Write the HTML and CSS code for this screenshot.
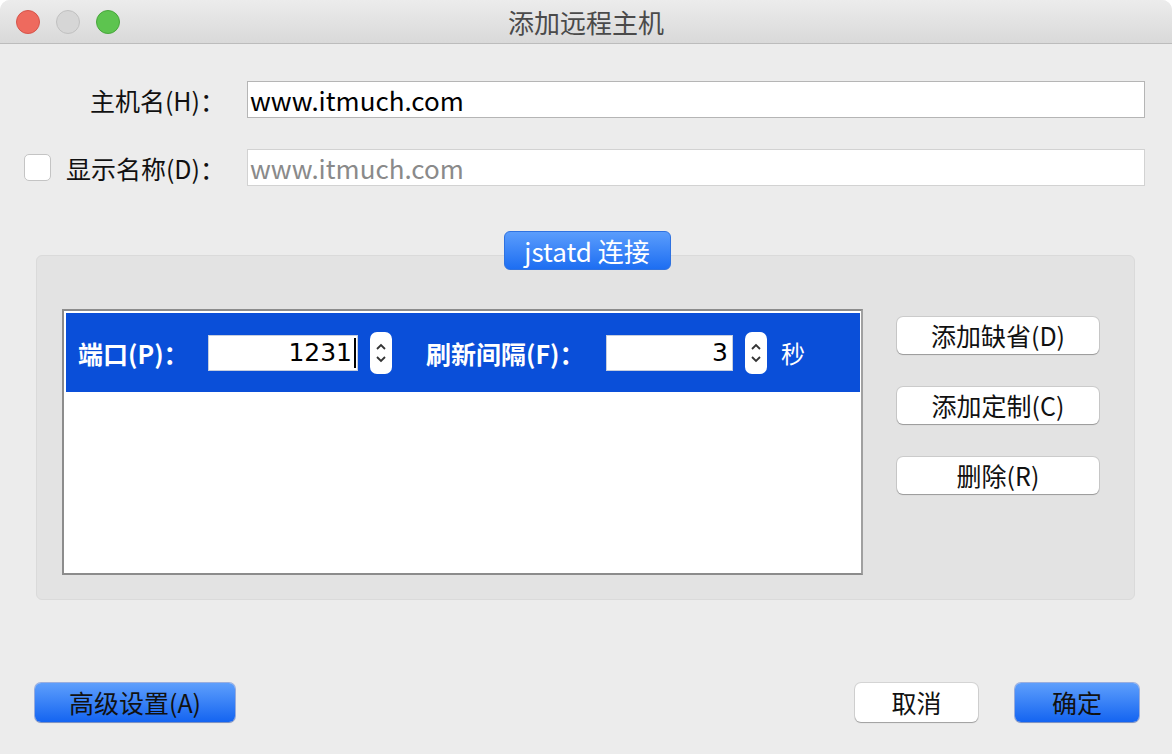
FILE: index.html
```html
<!DOCTYPE html>
<html lang="zh-CN">
<head>
  <meta charset="UTF-8">
  <title>添加远程主机</title>
  <link rel="stylesheet" href="styles.css">
</head>
<body>

<div class="window">
  <div class="titlebar">
    <div class="lights">
      <span class="light red"></span>
      <span class="light gray"></span>
      <span class="light green"></span>
    </div>
    <div class="title">添加远程主机</div>
  </div>

  <div class="content">
    <div class="form-row">
      <label class="label" for="host">主机名(H)：</label>
      <input class="field" id="host" type="text" value="www.itmuch.com">
    </div>
    <div class="form-row">
      <span class="check"></span>
      <label class="label" for="display">显示名称(D)：</label>
      <input class="field disabled" id="display" type="text" value="www.itmuch.com" disabled>
    </div>

    <div class="group-wrap">
      <div class="pill">jstatd 连接</div>
      <div class="group">
        <div class="table">
          <div class="row selected">
            <span class="cell-label port-label">端口(P)：</span>
            <span class="num port-num">1231<span class="caret"></span></span>
            <span class="spinner">
              <svg width="12" height="30" viewBox="0 0 12 30"><path d="M2 11 L6 7 L10 11" fill="none" stroke="#333" stroke-width="1.8"/><path d="M2 19 L6 23 L10 19" fill="none" stroke="#333" stroke-width="1.8"/></svg>
            </span>
            <span class="cell-label interval-label">刷新间隔(F)：</span>
            <span class="num interval-num">3</span>
            <span class="spinner">
              <svg width="12" height="30" viewBox="0 0 12 30"><path d="M2 11 L6 7 L10 11" fill="none" stroke="#333" stroke-width="1.8"/><path d="M2 19 L6 23 L10 19" fill="none" stroke="#333" stroke-width="1.8"/></svg>
            </span>
            <span class="unit">秒</span>
          </div>
        </div>
        <div class="side-buttons">
          <button type="button" class="btn">添加缺省(D)</button>
          <button type="button" class="btn">添加定制(C)</button>
          <button type="button" class="btn">删除(R)</button>
        </div>
      </div>
    </div>

    <div class="footer">
      <button type="button" class="btn blue advanced">高级设置(A)</button>
      <div class="footer-right">
        <button type="button" class="btn cancel">取消</button>
        <button type="button" class="btn blue ok">确定</button>
      </div>
    </div>
  </div>
</div>

</body>
</html>
```

FILE: styles.css
```css
body {
  margin: 0;
  padding: 0;
  background-color: #ffffff;
  font-family: "Noto Sans CJK SC", "Noto Sans", sans-serif;
}

.window {
  width: 1172px;
  height: 754px;
  background-color: #ececec;
  border-radius: 10px 10px 0 0;
  overflow: hidden;
  display: flex;
  flex-direction: column;
}

/* Title bar */
.titlebar {
  height: 43px;
  flex-shrink: 0;
  display: flex;
  align-items: center;
  background: linear-gradient(#ececec, #d9d9d9);
  border-bottom: 1px solid #bcbcbc;
  position: relative;
}

.lights {
  display: flex;
  gap: 16px;
  padding-left: 16px;
}

.light {
  width: 24px;
  height: 24px;
  border-radius: 50%;
  box-sizing: border-box;
}

.red { background-color: #ee6a5e; border: 1px solid #d5544a; }
.gray { background-color: #d6d6d6; border: 1px solid #c0c0c0; }
.green { background-color: #5dc44f; border: 1px solid #48a63c; }

.title {
  position: absolute;
  left: 0;
  right: 0;
  text-align: center;
  font-size: 26px;
  color: #4a4a4a;
  pointer-events: none;
}

/* Form */
.content {
  flex: 1;
  display: flex;
  flex-direction: column;
  padding: 37px 27px 32px 24px;
}

.form-row {
  display: flex;
  align-items: center;
  height: 37px;
  margin-bottom: 31px;
}

.label {
  width: 201px;
  margin-right: 22px;
  text-align: right;
  font-size: 25px;
  color: #111;
  white-space: nowrap;
}

.check {
  width: 27px;
  height: 27px;
  box-sizing: border-box;
  background-color: #fff;
  border: 1px solid #c4c4c4;
  border-radius: 5px;
}

.check + .label {
  width: 174px;
}

.field {
  flex: 1;
  height: 37px;
  box-sizing: border-box;
  border: 1px solid #b5b5b5;
  background-color: #fff;
  font-family: inherit;
  font-size: 26px;
  padding: 0 2px;
  color: #000;
  outline: none;
}

.field.disabled {
  border-color: #d2d2d2;
  color: #8a8a8a;
}

/* Group box */
.group-wrap {
  display: flex;
  flex-direction: column;
  align-items: center;
  margin-top: 14px;
  margin-left: 12px;
  margin-right: 10px;
}

.pill {
  position: relative;
  z-index: 1;
  width: 167px;
  height: 39px;
  box-sizing: border-box;
  margin-bottom: -15px;
  margin-left: 3px;
  display: flex;
  align-items: center;
  justify-content: center;
  font-size: 26px;
  color: #fff;
  border-radius: 6px;
  background: linear-gradient(#5b9dfc, #1d6ef2);
  border: 1px solid #2f72e0;
}

.group {
  align-self: stretch;
  display: flex;
  align-items: flex-start;
  background-color: #e3e3e3;
  border: 1px solid #dadada;
  border-radius: 6px;
  padding: 53px 35px 24px 25px;
}

.table {
  width: 801px;
  height: 266px;
  box-sizing: border-box;
  border: 2px solid #8c8c8c;
  border-right-color: #a0a0a0;
  padding: 2px 1px 1px 2px;
  background-color: #fff;
}

.row {
  height: 79px;
  display: flex;
  align-items: center;
  padding-left: 12px;
}

.row.selected {
  background-color: #0a4fd9;
  color: #fff;
}

.cell-label {
  font-size: 25px;
  font-weight: bold;
  white-space: nowrap;
}

.port-label {
  width: 130px;
}

.interval-label {
  width: 180px;
  margin-left: 34px;
}

.num {
  height: 36px;
  box-sizing: border-box;
  background-color: #fff;
  border: 1px solid #c6cede;
  color: #000;
  font-family: "DejaVu Sans", sans-serif;
  font-size: 25px;
  display: flex;
  align-items: center;
  justify-content: flex-end;
  padding-right: 4px;
}

.port-num {
  width: 150px;
  padding-right: 1px;
}

.interval-num {
  width: 127px;
}

.caret {
  width: 2px;
  height: 30px;
  background-color: #000;
  margin-left: 2px;
}

.spinner {
  width: 22px;
  height: 42px;
  margin-left: 12px;
  background-color: #fff;
  border-radius: 7px;
  display: flex;
  align-items: center;
  justify-content: center;
}

.unit {
  margin-left: 14px;
  font-size: 24px;
}

/* Buttons */
.side-buttons {
  display: flex;
  flex-direction: column;
  gap: 33px;
  margin-left: 34px;
  margin-top: 8px;
}

.btn {
  font-family: inherit;
  font-size: 25px;
  color: #111;
  background-color: #fff;
  border: none;
  border-radius: 6px;
  box-shadow: 0 0 0 1px rgba(0, 0, 0, 0.1), 0 1px 1px rgba(0, 0, 0, 0.25);
  height: 37px;
  padding: 0;
  line-height: 37px;
  cursor: pointer;
}

.side-buttons .btn {
  width: 202px;
}

.btn.blue {
  background: linear-gradient(#5e9ffc, #1464f1);
  box-shadow: 0 0 0 1px rgba(0, 60, 200, 0.35), 0 1px 1px rgba(0, 0, 0, 0.2);
}

.footer {
  margin-top: auto;
  display: flex;
  justify-content: space-between;
  align-items: center;
  padding-left: 11px;
  padding-right: 6px;
}

.footer .btn {
  height: 39px;
  line-height: 39px;
}

.footer-right {
  display: flex;
  gap: 37px;
}

.advanced {
  width: 200px;
}

.cancel {
  width: 123px;
}

.ok {
  width: 124px;
}
```
